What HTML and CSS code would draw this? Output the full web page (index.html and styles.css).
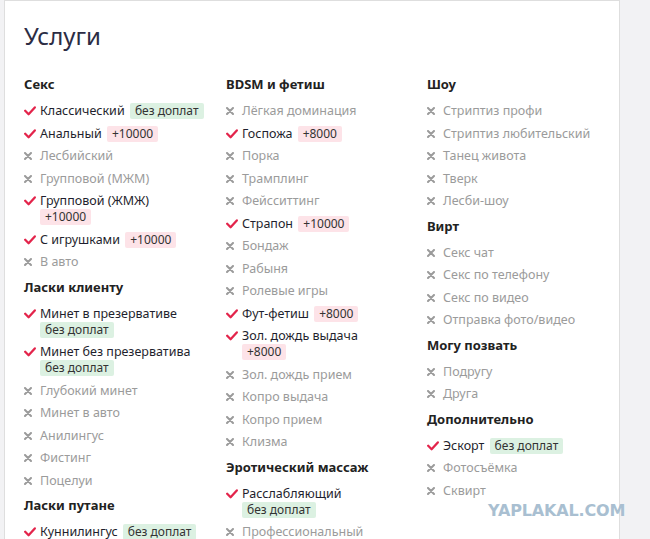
FILE: index.html
```html
<!DOCTYPE html>
<html lang="ru">
  <head>
    <meta charset="UTF-8" />
    <meta name="viewport" content="width=device-width, initial-scale=1.0" />
    <title>Услуги</title>
    <link rel="stylesheet" href="styles.css">
  </head>
  <body>
    <svg width="0" height="0" class="defs">
      <symbol id="yes" viewBox="0 0 12 10">
        <path d="M1.2 4.8 L4.6 8.2 L10.8 1.4" fill="none" stroke="currentColor" stroke-width="2.3" stroke-linecap="round" stroke-linejoin="round" />
      </symbol>
      <symbol id="no" viewBox="0 0 8 8">
        <path d="M1 1 L7 7 M7 1 L1 7" fill="none" stroke="currentColor" stroke-width="2" stroke-linecap="round" />
      </symbol>
    </svg>

    <div class="services">
      <h1>Услуги</h1>
      <div class="columns">
        <!-- column 1 -->
        <div class="column">
          <div class="group">
            <h3>Секс</h3>
            <ul>
              <li class="on"><svg class="icon"><use href="#yes" /></svg><span>Классический <em class="badge free">без доплат</em></span></li>
              <li class="on"><svg class="icon"><use href="#yes" /></svg><span>Анальный <em class="badge extra">+10000</em></span></li>
              <li><svg class="icon"><use href="#no" /></svg><span>Лесбийский</span></li>
              <li><svg class="icon"><use href="#no" /></svg><span>Групповой (МЖМ)</span></li>
              <li class="on"><svg class="icon"><use href="#yes" /></svg><span>Групповой (ЖМЖ) <em class="badge extra wrap">+10000</em></span></li>
              <li class="on"><svg class="icon"><use href="#yes" /></svg><span>С игрушками <em class="badge extra">+10000</em></span></li>
              <li><svg class="icon"><use href="#no" /></svg><span>В авто</span></li>
            </ul>
          </div>
          <div class="group">
            <h3>Ласки клиенту</h3>
            <ul>
              <li class="on"><svg class="icon"><use href="#yes" /></svg><span>Минет в презервативе <em class="badge free wrap">без доплат</em></span></li>
              <li class="on"><svg class="icon"><use href="#yes" /></svg><span>Минет без презерватива <em class="badge free wrap">без доплат</em></span></li>
              <li><svg class="icon"><use href="#no" /></svg><span>Глубокий минет</span></li>
              <li><svg class="icon"><use href="#no" /></svg><span>Минет в авто</span></li>
              <li><svg class="icon"><use href="#no" /></svg><span>Анилингус</span></li>
              <li><svg class="icon"><use href="#no" /></svg><span>Фистинг</span></li>
              <li><svg class="icon"><use href="#no" /></svg><span>Поцелуи</span></li>
            </ul>
          </div>
          <div class="group">
            <h3>Ласки путане</h3>
            <ul>
              <li class="on"><svg class="icon"><use href="#yes" /></svg><span>Куннилингус <em class="badge free">без доплат</em></span></li>
            </ul>
          </div>
        </div>

        <!-- column 2 -->
        <div class="column">
          <div class="group">
            <h3>BDSM и фетиш</h3>
            <ul>
              <li><svg class="icon"><use href="#no" /></svg><span>Лёгкая доминация</span></li>
              <li class="on"><svg class="icon"><use href="#yes" /></svg><span>Госпожа <em class="badge extra">+8000</em></span></li>
              <li><svg class="icon"><use href="#no" /></svg><span>Порка</span></li>
              <li><svg class="icon"><use href="#no" /></svg><span>Трамплинг</span></li>
              <li><svg class="icon"><use href="#no" /></svg><span>Фейсситтинг</span></li>
              <li class="on"><svg class="icon"><use href="#yes" /></svg><span>Страпон <em class="badge extra">+10000</em></span></li>
              <li><svg class="icon"><use href="#no" /></svg><span>Бондаж</span></li>
              <li><svg class="icon"><use href="#no" /></svg><span>Рабыня</span></li>
              <li><svg class="icon"><use href="#no" /></svg><span>Ролевые игры</span></li>
              <li class="on"><svg class="icon"><use href="#yes" /></svg><span>Фут-фетиш <em class="badge extra">+8000</em></span></li>
              <li class="on"><svg class="icon"><use href="#yes" /></svg><span>Зол. дождь выдача <em class="badge extra wrap">+8000</em></span></li>
              <li><svg class="icon"><use href="#no" /></svg><span>Зол. дождь прием</span></li>
              <li><svg class="icon"><use href="#no" /></svg><span>Копро выдача</span></li>
              <li><svg class="icon"><use href="#no" /></svg><span>Копро прием</span></li>
              <li><svg class="icon"><use href="#no" /></svg><span>Клизма</span></li>
            </ul>
          </div>
          <div class="group">
            <h3>Эротический массаж</h3>
            <ul>
              <li class="on"><svg class="icon"><use href="#yes" /></svg><span>Расслабляющий <em class="badge free wrap">без доплат</em></span></li>
              <li><svg class="icon"><use href="#no" /></svg><span>Профессиональный</span></li>
            </ul>
          </div>
        </div>

        <!-- column 3 -->
        <div class="column">
          <div class="group">
            <h3>Шоу</h3>
            <ul>
              <li><svg class="icon"><use href="#no" /></svg><span>Стриптиз профи</span></li>
              <li><svg class="icon"><use href="#no" /></svg><span>Стриптиз любительский</span></li>
              <li><svg class="icon"><use href="#no" /></svg><span>Танец живота</span></li>
              <li><svg class="icon"><use href="#no" /></svg><span>Тверк</span></li>
              <li><svg class="icon"><use href="#no" /></svg><span>Лесби-шоу</span></li>
            </ul>
          </div>
          <div class="group">
            <h3>Вирт</h3>
            <ul>
              <li><svg class="icon"><use href="#no" /></svg><span>Секс чат</span></li>
              <li><svg class="icon"><use href="#no" /></svg><span>Секс по телефону</span></li>
              <li><svg class="icon"><use href="#no" /></svg><span>Секс по видео</span></li>
              <li><svg class="icon"><use href="#no" /></svg><span>Отправка фото/видео</span></li>
            </ul>
          </div>
          <div class="group">
            <h3>Могу позвать</h3>
            <ul>
              <li><svg class="icon"><use href="#no" /></svg><span>Подругу</span></li>
              <li><svg class="icon"><use href="#no" /></svg><span>Друга</span></li>
            </ul>
          </div>
          <div class="group">
            <h3>Дополнительно</h3>
            <ul>
              <li class="on"><svg class="icon"><use href="#yes" /></svg><span>Эскорт <em class="badge free">без доплат</em></span></li>
              <li><svg class="icon"><use href="#no" /></svg><span>Фотосъёмка</span></li>
              <li><svg class="icon"><use href="#no" /></svg><span>Сквирт</span></li>
            </ul>
          </div>
        </div>
      </div>
    </div>

    <div class="watermark">YAPLAKAL.COM</div>
  </body>
</html>
```

FILE: styles.css
```css
body {
  margin: 0;
  padding-left: 4px;
  height: 539px;
  overflow: hidden;
  background-color: #f2f2f4;
  font-family: "Noto Sans", "Open Sans", sans-serif;
  color: #222;
}
.defs {
  position: absolute;
}
.services {
  width: 576px;
  min-height: 600px;
  background: white;
  border: 1px solid #dedede;
  border-bottom: none;
  padding: 15px 19px 0 19px;
}
.services h1 {
  margin: 0 0 20px 0;
  font-size: 24px;
  line-height: 40px;
  font-weight: 400;
  color: #2c2c44;
}
.columns {
  display: grid;
  grid-template-columns: 202px 201px 173px;
}
.group {
  margin-bottom: 8.5px;
}
.group h3 {
  margin: 0 0 10px 0;
  font-size: 13px;
  line-height: 17px;
  font-weight: 700;
  color: #222;
}
.group ul {
  list-style: none;
  margin: 0;
  padding: 0;
}
.group li {
  display: flex;
  align-items: flex-start;
  margin-bottom: 6.5px;
  font-size: 12.5px;
  line-height: 16px;
  color: #9b9b9b;
  white-space: nowrap;
}
.group li.on {
  color: #1f1f2e;
}
.icon {
  flex: none;
  width: 8px;
  height: 8px;
  margin: 4px 8px 0 0;
  color: #9b9b9b;
}
.on .icon {
  width: 12px;
  height: 10px;
  margin: 3px 4px 0 0;
  color: #e3244b;
}
.badge {
  display: inline-block;
  vertical-align: top;
  margin-left: 2px;
  padding: 0 5px;
  border-radius: 2px;
  font-style: normal;
  font-size: 12px;
  line-height: 16px;
  color: #333;
}
.badge.wrap {
  display: table;
  margin-left: 0;
}
.badge.free {
  background-color: #dcf1e2;
}
.badge.extra {
  background-color: #fde3e8;
}
.watermark {
  position: absolute;
  left: 488px;
  top: 501px;
  font-family: "DejaVu Sans", sans-serif;
  font-weight: 700;
  font-size: 16px;
  letter-spacing: -0.15px;
  color: #a9bfd1;
}
```
